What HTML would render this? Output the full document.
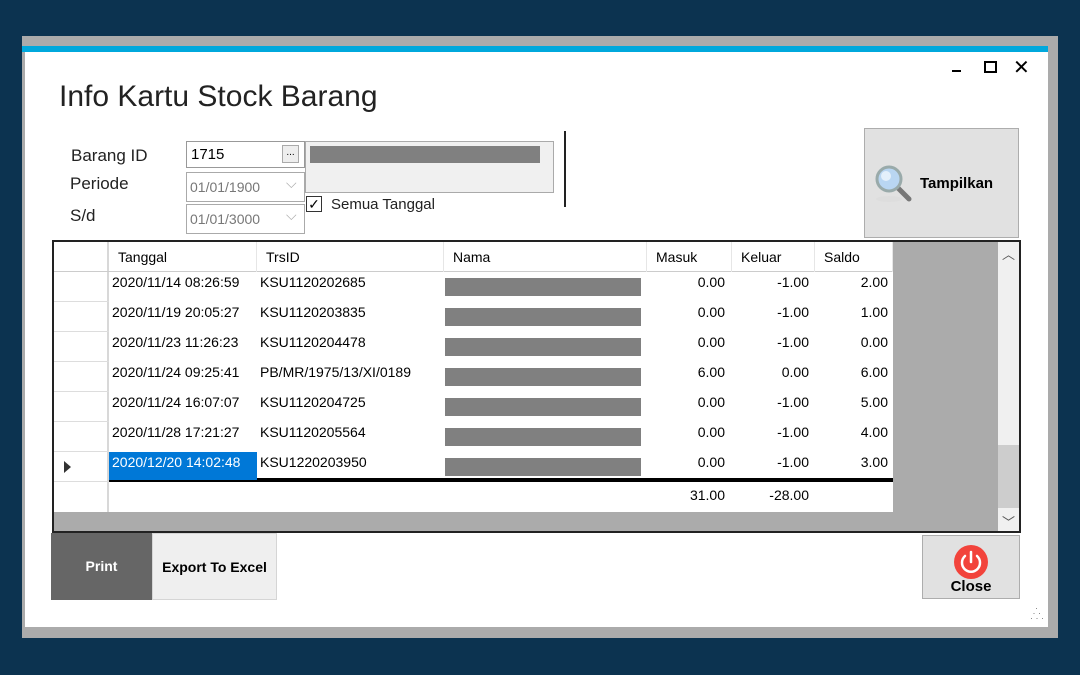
<!DOCTYPE html>
<html><head><meta charset="utf-8"><style>
*{margin:0;padding:0;box-sizing:border-box}
body{width:1080px;height:675px;background:#0c3350;position:relative;overflow:hidden;font-family:"Liberation Sans",sans-serif;font-size:14px;color:#000}
.a{position:absolute}
.cell{position:absolute;height:30px;line-height:30px;font-size:14px;white-space:nowrap}
.r{text-align:right}
.hd{position:absolute;top:0;height:30px;line-height:30px;padding-left:9px;font-size:14px;border-right:1px solid #e6e6e6}
</style></head><body>
<div class="a" style="left:22px;top:36px;width:1036px;height:602px;background:#ababab"></div>
<div class="a" style="left:22px;top:46px;width:1026px;height:6px;background:#00a8dc"></div>
<div class="a" style="left:25px;top:52px;width:1023px;height:575px;background:#fff"></div>
<!-- window buttons -->
<div class="a" style="left:952px;top:70px;width:9px;height:2px;background:#000"></div>
<div class="a" style="left:984px;top:61px;width:13px;height:12px;border:2px solid #000"></div>
<div class="a" style="left:1013px;top:55px;font-size:20px">✕</div>
<div class="a" style="left:59px;top:80px;font-size:30px;color:#222">Info Kartu Stock Barang</div>
<div class="a" style="left:71px;top:146px;font-size:17px;color:#222">Barang ID</div>
<div class="a" style="left:70px;top:174px;font-size:17px;color:#222">Periode</div>
<div class="a" style="left:70px;top:206px;font-size:17px;color:#222">S/d</div>
<div class="a" style="left:186px;top:141px;width:119px;height:27px;border:1px solid #999"><span class="a" style="left:4px;top:4px;font-size:15px">1715</span><div class="a" style="left:95px;top:3px;width:17px;height:18px;border:1px solid #aaa;background:#eee;font-size:10px;text-align:center;line-height:14px">...</div></div>
<div class="a" style="left:186px;top:172px;width:119px;height:30px;border:1px solid #aaa"><span class="a" style="left:3px;top:6px;font-size:14px;color:#777">01/01/1900</span><span class="a" style="left:99px;top:2px;color:#aaa">⌵</span></div>
<div class="a" style="left:186px;top:204px;width:119px;height:30px;border:1px solid #aaa"><span class="a" style="left:3px;top:6px;font-size:14px;color:#777">01/01/3000</span><span class="a" style="left:99px;top:2px;color:#aaa">⌵</span></div>
<div class="a" style="left:305px;top:141px;width:249px;height:52px;border:1px solid #aaa;background:#f0f0f0"><div class="a" style="left:4px;top:4px;width:230px;height:17px;background:#808080"></div></div>
<div class="a" style="left:306px;top:196px;width:16px;height:16px;border:1px solid #333;background:#fff;font-size:14px;line-height:14px;text-align:center">✓</div>
<div class="a" style="left:331px;top:196px;font-size:15px;color:#222">Semua Tanggal</div>
<div class="a" style="left:564px;top:131px;width:2px;height:76px;background:#222"></div>
<div class="a" style="left:864px;top:128px;width:155px;height:110px;background:#e1e1e1;border:1px solid #adadad">
<svg class="a" style="left:8px;top:34px" width="42" height="42" viewBox="0 0 42 42"><ellipse cx="16" cy="36" rx="13" ry="3" fill="#ddd"/><line x1="24" y1="24" x2="36" y2="36" stroke="#777" stroke-width="5" stroke-linecap="round"/><circle cx="16" cy="16" r="12" fill="#b9d6f2" stroke="#9aa" stroke-width="3"/><circle cx="13" cy="13" r="5" fill="#e4f0fb"/></svg>
<div class="a" style="left:55px;top:46px;font-weight:bold;font-size:15px">Tampilkan</div></div>
<!-- grid -->
<div class="a" style="left:52px;top:240px;width:969px;height:293px;border:2px solid #222;background:#ababab;overflow:hidden">
<div class="a" style="left:0;top:0;width:839px;height:270px;background:#fff"></div>
<div class="a" style="left:0;top:0;width:55px;height:270px;border-right:2px solid #d8d8d8"></div>
<div class="a" style="left:0;top:0;width:839px;height:30px;border-bottom:1px solid #ccc">
<div class="hd" style="left:55px;width:148px">Tanggal</div><div class="hd" style="left:203px;width:187px">TrsID</div><div class="hd" style="left:390px;width:203px">Nama</div><div class="hd" style="left:593px;width:85px">Masuk</div><div class="hd" style="left:678px;width:83px">Keluar</div><div class="hd" style="left:761px;width:78px">Saldo</div></div>
<div class="a" style="left:0;top:59px;width:55px;height:1px;background:#ddd"></div><div class="a" style="left:0;top:89px;width:55px;height:1px;background:#ddd"></div><div class="a" style="left:0;top:119px;width:55px;height:1px;background:#ddd"></div><div class="a" style="left:0;top:149px;width:55px;height:1px;background:#ddd"></div><div class="a" style="left:0;top:179px;width:55px;height:1px;background:#ddd"></div><div class="a" style="left:0;top:209px;width:55px;height:1px;background:#ddd"></div><div class="a" style="left:0;top:239px;width:55px;height:1px;background:#ddd"></div>
<div class="a" style="left:55px;top:236px;width:784px;height:4px;background:#000"></div>
<div class="a" style="left:55px;top:210px;width:148px;height:28px;background:#0078d7"></div>
<div class="a" style="left:10px;top:219px;width:0;height:0;border-left:7px solid #333;border-top:6px solid transparent;border-bottom:6px solid transparent"></div>
</div>
<div id="rows"></div>
<div class="a" style="left:998px;top:242px;width:21px;height:289px;background:#f0f0f0"></div>
<div class="a" style="left:998px;top:445px;width:21px;height:63px;background:#cdcdcd"></div>
<div class="a" style="left:1002px;top:244px;font-size:13px;color:#555">︿</div>
<div class="a" style="left:1002px;top:512px;font-size:13px;color:#555">﹀</div>
<!-- buttons -->
<div class="a" style="left:51px;top:533px;width:101px;height:67px;background:#666;color:#fff;font-weight:bold;text-align:center;line-height:67px">Print</div>
<div class="a" style="left:152px;top:533px;width:125px;height:67px;background:#efefef;border:1px solid #d5d5d5;font-weight:bold;text-align:center;line-height:67px">Export To Excel</div>
<div class="a" style="left:922px;top:535px;width:98px;height:64px;background:#e1e1e1;border:1px solid #adadad">
<svg class="a" style="left:30px;top:8px" width="36" height="36" viewBox="0 0 36 36"><circle cx="18" cy="18" r="17" fill="#f2433b"/><path d="M12 12 A9 9 0 1 0 24 12" fill="none" stroke="#fff" stroke-width="2.5" stroke-linecap="round"/><line x1="18" y1="8" x2="18" y2="18" stroke="#fff" stroke-width="2.5" stroke-linecap="round"/></svg>
<div class="a" style="left:0;top:42px;width:96px;text-align:center;font-weight:bold;font-size:15px">Close</div></div>
<div class="a" style="left:1030px;top:606px;font-size:9px;color:#777;line-height:5px">&nbsp;&nbsp;·<br>&nbsp;·&nbsp;·<br>·&nbsp;·&nbsp;·</div>
<div class="cell" style="left:112px;top:267px">2020/11/14 08:26:59</div><div class="cell" style="left:260px;top:267px">KSU1120202685</div><div class="a" style="left:445px;top:278px;width:196px;height:18px;background:#808080"></div><div class="cell r" style="left:645px;top:267px;width:80px">0.00</div><div class="cell r" style="left:730px;top:267px;width:79px">-1.00</div><div class="cell r" style="left:813px;top:267px;width:75px">2.00</div>
<div class="cell" style="left:112px;top:297px">2020/11/19 20:05:27</div><div class="cell" style="left:260px;top:297px">KSU1120203835</div><div class="a" style="left:445px;top:308px;width:196px;height:18px;background:#808080"></div><div class="cell r" style="left:645px;top:297px;width:80px">0.00</div><div class="cell r" style="left:730px;top:297px;width:79px">-1.00</div><div class="cell r" style="left:813px;top:297px;width:75px">1.00</div>
<div class="cell" style="left:112px;top:327px">2020/11/23 11:26:23</div><div class="cell" style="left:260px;top:327px">KSU1120204478</div><div class="a" style="left:445px;top:338px;width:196px;height:18px;background:#808080"></div><div class="cell r" style="left:645px;top:327px;width:80px">0.00</div><div class="cell r" style="left:730px;top:327px;width:79px">-1.00</div><div class="cell r" style="left:813px;top:327px;width:75px">0.00</div>
<div class="cell" style="left:112px;top:357px">2020/11/24 09:25:41</div><div class="cell" style="left:260px;top:357px">PB/MR/1975/13/XI/0189</div><div class="a" style="left:445px;top:368px;width:196px;height:18px;background:#808080"></div><div class="cell r" style="left:645px;top:357px;width:80px">6.00</div><div class="cell r" style="left:730px;top:357px;width:79px">0.00</div><div class="cell r" style="left:813px;top:357px;width:75px">6.00</div>
<div class="cell" style="left:112px;top:387px">2020/11/24 16:07:07</div><div class="cell" style="left:260px;top:387px">KSU1120204725</div><div class="a" style="left:445px;top:398px;width:196px;height:18px;background:#808080"></div><div class="cell r" style="left:645px;top:387px;width:80px">0.00</div><div class="cell r" style="left:730px;top:387px;width:79px">-1.00</div><div class="cell r" style="left:813px;top:387px;width:75px">5.00</div>
<div class="cell" style="left:112px;top:417px">2020/11/28 17:21:27</div><div class="cell" style="left:260px;top:417px">KSU1120205564</div><div class="a" style="left:445px;top:428px;width:196px;height:18px;background:#808080"></div><div class="cell r" style="left:645px;top:417px;width:80px">0.00</div><div class="cell r" style="left:730px;top:417px;width:79px">-1.00</div><div class="cell r" style="left:813px;top:417px;width:75px">4.00</div>
<div class="cell" style="left:112px;top:447px;color:#fff">2020/12/20 14:02:48</div><div class="cell" style="left:260px;top:447px">KSU1220203950</div><div class="a" style="left:445px;top:458px;width:196px;height:18px;background:#808080"></div><div class="cell r" style="left:645px;top:447px;width:80px">0.00</div><div class="cell r" style="left:730px;top:447px;width:79px">-1.00</div><div class="cell r" style="left:813px;top:447px;width:75px">3.00</div>
<div class="cell r" style="left:645px;top:480px;width:80px">31.00</div><div class="cell r" style="left:730px;top:480px;width:79px">-28.00</div>
</body></html>
